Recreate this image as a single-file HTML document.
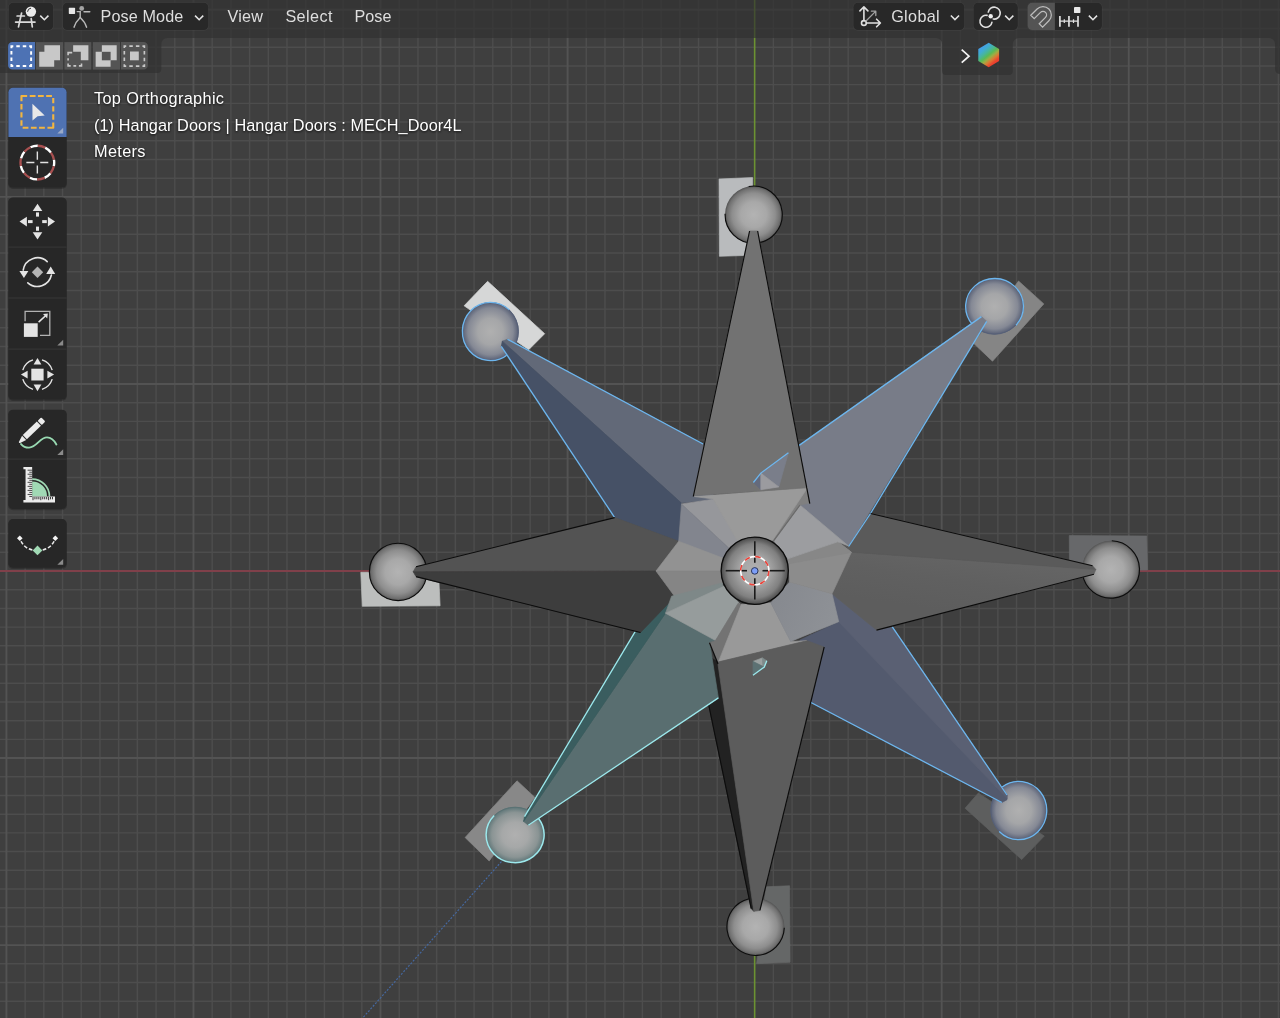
<!DOCTYPE html>
<html lang="en"><head><meta charset="utf-8"><title>Blender 3D Viewport</title>
<style>
html,body{margin:0;padding:0;}
body{width:1280px;height:1018px;overflow:hidden;background:#3f3f3f;position:relative;font-family:"Liberation Sans","DejaVu Sans",sans-serif;}
#vp{position:absolute;left:0;top:0;display:block;}

.ov{position:absolute;left:0;top:0;display:block;pointer-events:none;}

</style></head>
<body>
<svg id="vp" width="1280" height="1018" viewBox="0 0 1280 1018">
<defs>
<radialGradient id="sg" cx="50%" cy="50%" r="50%"><stop offset="0" stop-color="#b3b3b3"/><stop offset="0.45" stop-color="#a8a8a8"/><stop offset="0.75" stop-color="#8e8e8e"/><stop offset="0.92" stop-color="#707070"/><stop offset="1" stop-color="#525252"/></radialGradient>
<radialGradient id="sc" cx="50%" cy="50%" r="50%"><stop offset="0" stop-color="#b2b2b2"/><stop offset="0.45" stop-color="#a4a4a4"/><stop offset="0.8" stop-color="#808080"/><stop offset="1" stop-color="#484848"/></radialGradient>
<radialGradient id="sb" cx="50%" cy="50%" r="50%"><stop offset="0" stop-color="#b0b0b0"/><stop offset="0.45" stop-color="#a5a6a8"/><stop offset="0.8" stop-color="#858995"/><stop offset="1" stop-color="#565e74"/></radialGradient>
<radialGradient id="st" cx="50%" cy="50%" r="50%"><stop offset="0" stop-color="#b0b0b0"/><stop offset="0.45" stop-color="#a6a8a8"/><stop offset="0.8" stop-color="#8a9494"/><stop offset="1" stop-color="#5c7476"/></radialGradient>
<linearGradient id="eg" gradientUnits="userSpaceOnUse" x1="960" y1="556" x2="952" y2="612"><stop offset="0" stop-color="#646464"/><stop offset="0.45" stop-color="#606060"/><stop offset="1" stop-color="#5d5d5d"/></linearGradient>
<linearGradient id="seh" x1="0" y1="0" x2="1" y2="0.4"><stop offset="0" stop-color="#85888e"/><stop offset="1" stop-color="#8e9196"/></linearGradient>
</defs>
<path d="M25.12 0V1018M43.82 0V1018M62.53 0V1018M81.23 0V1018M99.94 0V1018M118.65 0V1018M137.35 0V1018M156.06 0V1018M174.76 0V1018M212.18 0V1018M230.88 0V1018M249.59 0V1018M268.29 0V1018M287.00 0V1018M305.71 0V1018M324.41 0V1018M343.12 0V1018M361.82 0V1018M399.24 0V1018M417.94 0V1018M436.65 0V1018M455.35 0V1018M474.06 0V1018M492.77 0V1018M511.47 0V1018M530.18 0V1018M548.88 0V1018M586.30 0V1018M605.00 0V1018M623.71 0V1018M642.41 0V1018M661.12 0V1018M679.83 0V1018M698.53 0V1018M717.24 0V1018M735.94 0V1018M773.36 0V1018M792.06 0V1018M810.77 0V1018M829.47 0V1018M848.18 0V1018M866.89 0V1018M885.59 0V1018M904.30 0V1018M923.00 0V1018M960.42 0V1018M979.12 0V1018M997.83 0V1018M1016.53 0V1018M1035.24 0V1018M1053.95 0V1018M1072.65 0V1018M1091.36 0V1018M1110.06 0V1018M1147.48 0V1018M1166.18 0V1018M1184.89 0V1018M1203.59 0V1018M1222.30 0V1018M1241.01 0V1018M1259.71 0V1018M1278.42 0V1018M0 28.53H1280M0 47.23H1280M0 65.94H1280M0 84.64H1280M0 103.35H1280M0 122.06H1280M0 140.76H1280M0 159.47H1280M0 178.17H1280M0 215.59H1280M0 234.29H1280M0 253.00H1280M0 271.70H1280M0 290.41H1280M0 309.12H1280M0 327.82H1280M0 346.53H1280M0 365.23H1280M0 402.65H1280M0 421.35H1280M0 440.06H1280M0 458.76H1280M0 477.47H1280M0 496.18H1280M0 514.88H1280M0 533.59H1280M0 552.29H1280M0 589.71H1280M0 608.41H1280M0 627.12H1280M0 645.82H1280M0 664.53H1280M0 683.24H1280M0 701.94H1280M0 720.65H1280M0 739.35H1280M0 776.77H1280M0 795.47H1280M0 814.18H1280M0 832.88H1280M0 851.59H1280M0 870.30H1280M0 889.00H1280M0 907.71H1280M0 926.41H1280M0 963.83H1280M0 982.53H1280M0 1001.24H1280" stroke="#4d4d4d" stroke-width="1.45" fill="none"/>
<path d="M6.41 0V1018M193.47 0V1018M380.53 0V1018M567.59 0V1018M941.71 0V1018M1128.77 0V1018M0 9.82H1280M0 196.88H1280M0 383.94H1280M0 758.06H1280M0 945.12H1280" stroke="#535353" stroke-width="1.9" fill="none"/>
<rect x="0" y="570" width="1280" height="2" fill="#80404a"/>
<rect x="753.85" y="0" width="1.6" height="1018" fill="#6c9232"/>
<line x1="501.4" y1="861.6" x2="362.3" y2="1018.4" stroke="#4569a2" stroke-width="1.15" stroke-dasharray="2 1.55"/>
<polygon points="719.0,179.0 752.6,177.6 753.2,255.2 719.4,256.3" fill="#b9bbbd" stroke="#b9bbbd" stroke-width="0.7" stroke-linejoin="round" />
<polygon points="487.6,281.3 544.7,333.7 528.7,349.7 464.1,305.8" fill="#d6d7d7" stroke="#d6d7d7" stroke-width="0.7" stroke-linejoin="round" />
<polygon points="1018.5,281.0 1043.8,303.9 992.5,361.2 973.6,343.3" fill="#858585" stroke="#858585" stroke-width="0.7" stroke-linejoin="round" />
<polygon points="360.8,572.3 438.5,572.3 440.1,605.8 362.3,606.3" fill="#bcbebd" stroke="#bcbebd" stroke-width="0.7" stroke-linejoin="round" />
<polygon points="1069.3,535.6 1146.7,536.0 1147.6,570.0 1069.5,570.0" fill="#67686a" stroke="#67686a" stroke-width="0.7" stroke-linejoin="round" />
<polygon points="517.0,780.8 534.9,797.4 489.2,861.0 465.1,837.5" fill="#888888" stroke="#888888" stroke-width="0.7" stroke-linejoin="round" />
<polygon points="978.3,793.1 1044.3,836.0 1021.7,859.6 965.1,808.2" fill="#5d5e5e" stroke="#5d5e5e" stroke-width="0.7" stroke-linejoin="round" />
<polygon points="766.0,886.8 789.6,885.8 790.1,962.3 756.6,963.7" fill="#656767" stroke="#656767" stroke-width="0.7" stroke-linejoin="round" />
<ellipse cx="753.7" cy="214.7" rx="28.7" ry="28.7" fill="url(#sg)"/><path d="M748.7 186.5A28.60 28.60 0 1 1 725.1 213.7" fill="none" stroke="#0c0c0c" stroke-width="1.15"/>
<ellipse cx="490.5" cy="331.5" rx="28.2" ry="29.2" fill="url(#sb)"/><ellipse cx="490.5" cy="331.5" rx="27.90" ry="28.90" fill="none" stroke="#566078" stroke-width="1"/><path d="M507.8 354.4A28.10 29.10 0 1 1 509.3 309.9" fill="none" stroke="#6db6ee" stroke-width="1.3"/>
<ellipse cx="994.5" cy="306.45" rx="29.0" ry="28.05" fill="url(#sb)"/><ellipse cx="994.5" cy="306.45" rx="28.70" ry="27.75" fill="none" stroke="#566078" stroke-width="1"/><path d="M972.4 324.4A28.90 27.95 0 1 1 1016.0 325.2" fill="none" stroke="#6db6ee" stroke-width="1.3"/>
<ellipse cx="398.1" cy="571.9" rx="28.8" ry="28.8" fill="url(#sg)"/><ellipse cx="398.1" cy="571.9" rx="28.70" ry="28.70" fill="none" stroke="#0c0c0c" stroke-width="1.15"/>
<ellipse cx="1110.8" cy="569.5" rx="28.8" ry="28.8" fill="url(#sg)"/><path d="M1111.8 540.8A28.70 28.70 0 1 1 1082.4 573.5" fill="none" stroke="#0c0c0c" stroke-width="1.15"/>
<ellipse cx="515.1" cy="834.85" rx="29.1" ry="27.95" fill="url(#st)"/><ellipse cx="515.1" cy="834.85" rx="28.80" ry="27.65" fill="none" stroke="#5a7274" stroke-width="1"/><path d="M538.6 818.5A29.00 27.85 0 1 1 494.2 815.5" fill="none" stroke="#9ce8ec" stroke-width="1.5"/>
<ellipse cx="1018.7" cy="810.5" rx="28.15" ry="29.3" fill="url(#sb)"/><ellipse cx="1018.7" cy="810.5" rx="27.85" ry="29.00" fill="none" stroke="#566078" stroke-width="1"/><path d="M1002.2 786.9A28.05 29.20 0 1 1 999.2 831.5" fill="none" stroke="#6db6ee" stroke-width="1.3"/>
<ellipse cx="755.6" cy="926.8" rx="28.8" ry="28.8" fill="url(#sg)"/><path d="M784.3 927.8A28.70 28.70 0 1 1 749.1 898.8" fill="none" stroke="#0c0c0c" stroke-width="1.15"/>
<polygon points="502.3,341.2 507.5,339.3 703.1,444.0 714.0,499.4 681.4,503.1" fill="#626978" stroke="#626978" stroke-width="0.7" stroke-linejoin="round" />
<polygon points="502.3,341.2 501.3,346.4 614.7,517.6 678.7,541.3 681.4,503.1" fill="#465166" stroke="#465166" stroke-width="0.7" stroke-linejoin="round" />
<polyline points="614.7,517.6 501.3,346.4" fill="none" stroke="#6db6ee" stroke-width="1.3" />
<polyline points="507.5,339.3 703.1,444.0" fill="none" stroke="#6db6ee" stroke-width="1.3" />
<polygon points="981.5,316.6 986.7,321.3 848.6,546.5 800.0,505.0 790.0,452.0" fill="#787c88" stroke="#787c88" stroke-width="0.7" stroke-linejoin="round" />
<polyline points="797.7,446.4 981.5,316.6" fill="none" stroke="#6db6ee" stroke-width="1.3" />
<polyline points="986.7,321.3 870.5,513.5" fill="none" stroke="#6db6ee" stroke-width="1.3" />
<polygon points="1007.0,795.0 1007.0,799.7 1001.9,802.5 810.0,702.0 800.0,640.0 838.7,621.7 832.0,593.8 891.8,626.2" fill="#535a6e" stroke="#535a6e" stroke-width="0.7" stroke-linejoin="round" />
<polygon points="1007.0,795.0 1007.0,798.5 838.7,621.7 832.0,593.8 891.8,626.2" fill="#5a6073" stroke="#5a6073" stroke-width="0.7" stroke-linejoin="round" />
<polyline points="810.0,702.0 1001.9,802.5" fill="none" stroke="#6db6ee" stroke-width="1.3" />
<polyline points="1007.0,795.0 891.8,626.2" fill="none" stroke="#6db6ee" stroke-width="1.3" />
<polygon points="700.0,650.0 717.7,662.1 753.8,911.3 751.2,908.5 708.9,705.5" fill="#222222" stroke="#222222" stroke-width="0.7" stroke-linejoin="round" />
<polyline points="706.0,692.0 751.2,908.5" fill="none" stroke="#0c0c0c" stroke-width="1.15" />
<polygon points="523.6,821.4 528.3,825.2 718.4,697.9 709.6,642.6 715.5,640.5 665.5,613.2" fill="#596e70" stroke="#596e70" stroke-width="0.7" stroke-linejoin="round" />
<polygon points="523.6,821.4 524.5,816.7 634.8,632.1 671.6,596.2 665.5,613.2" fill="#3a5d5f" stroke="#3a5d5f" stroke-width="0.7" stroke-linejoin="round" />
<polyline points="636.5,629.3 524.5,816.7" fill="none" stroke="#9ce8ec" stroke-width="1.3" />
<polyline points="528.3,825.2 718.4,697.9" fill="none" stroke="#9ce8ec" stroke-width="1.3" />
<polygon points="413.2,571.7 416.0,566.7 614.7,517.6 678.7,541.3 656.0,571.0" fill="#535353" stroke="#535353" stroke-width="0.7" stroke-linejoin="round" />
<polygon points="413.2,571.7 416.0,576.6 640.5,632.5 674.9,596.7 656.0,571.0" fill="#3d3d3d" stroke="#3d3d3d" stroke-width="0.7" stroke-linejoin="round" />
<polyline points="614.7,517.6 416.0,566.7" fill="none" stroke="#0c0c0c" stroke-width="1.15" />
<polyline points="416.0,576.6 640.5,632.5" fill="none" stroke="#0c0c0c" stroke-width="1.15" />
<polygon points="1095.8,569.5 1093.9,574.2 876.5,630.1 832.0,593.8 851.4,552.2" fill="url(#eg)" stroke="url(#eg)" stroke-width="0.7" stroke-linejoin="round" />
<polygon points="1095.8,569.5 1092.5,565.8 870.5,513.5 848.6,546.5 837.7,541.8 851.4,552.2" fill="#5a5a5a" stroke="#5a5a5a" stroke-width="0.7" stroke-linejoin="round" />
<polyline points="870.5,513.5 1092.5,565.8" fill="none" stroke="#0c0c0c" stroke-width="1.15" />
<polyline points="1093.9,574.2 876.5,630.1" fill="none" stroke="#0c0c0c" stroke-width="1.15" />
<polyline points="870.5,513.5 848.6,546.5" fill="none" stroke="#6db6ee" stroke-width="1.3" />
<polygon points="681.5,504.0 713.5,499.2 742.0,543.0 728.7,547.9" fill="#96979b" stroke="#96979b" stroke-width="0.7" stroke-linejoin="round" />
<polygon points="681.5,504.0 728.7,547.9 722.0,560.0 678.7,541.3" fill="#82858e" stroke="#82858e" stroke-width="0.7" stroke-linejoin="round" />
<polygon points="678.7,541.3 724.0,558.5 722.0,571.0 656.0,571.0" fill="#929292" stroke="#929292" stroke-width="0.7" stroke-linejoin="round" />
<polygon points="656.0,571.0 722.0,571.0 723.0,583.5 674.9,596.7" fill="#858585" stroke="#858585" stroke-width="0.7" stroke-linejoin="round" />
<polygon points="671.6,596.2 722.0,583.0 724.0,588.0 665.5,613.2" fill="#7e8888" stroke="#7e8888" stroke-width="0.7" stroke-linejoin="round" />
<polygon points="665.5,613.2 724.0,586.3 740.0,604.0 715.5,640.5" fill="#969c9c" stroke="#969c9c" stroke-width="0.7" stroke-linejoin="round" />
<polygon points="709.3,642.9 715.5,640.5 738.1,603.3 742.4,604.7 718.3,662.0" fill="#737373" stroke="#737373" stroke-width="0.7" stroke-linejoin="round" />
<polygon points="741.4,604.2 770.8,602.8 790.6,641.5 807.0,640.7 718.3,662.2" fill="#999999" stroke="#999999" stroke-width="0.7" stroke-linejoin="round" />
<polygon points="770.8,602.8 789.6,582.0 832.0,593.8 838.7,621.7 790.6,641.5" fill="url(#seh)" stroke="url(#seh)" stroke-width="0.7" stroke-linejoin="round" />
<polygon points="787.7,558.8 837.7,541.8 851.4,552.2 832.0,593.8 789.6,582.0" fill="#8c8c8c" stroke="#8c8c8c" stroke-width="0.7" stroke-linejoin="round" />
<polygon points="787.9,559.1 837.8,541.8 851.5,552.4 788.6,563.8" fill="#878787" stroke="#878787" stroke-width="0.7" stroke-linejoin="round" />
<polygon points="800.0,505.0 848.4,545.9 837.7,541.8 787.7,558.8 773.6,540.8" fill="#9c9da0" stroke="#9c9da0" stroke-width="0.7" stroke-linejoin="round" />
<polygon points="806.6,488.0 809.6,503.1 800.0,505.0 773.6,540.8 770.0,538.0" fill="#808080" stroke="#808080" stroke-width="0.7" stroke-linejoin="round" />
<polygon points="694.4,496.6 807.7,487.5 772.5,540.5 737.0,540.0 713.1,498.9" fill="#9a9a9a" stroke="#9a9a9a" stroke-width="0.7" stroke-linejoin="round" />
<polyline points="800.0,505.0 773.6,540.8" fill="none" stroke="#6a6a6a" stroke-width="1.2" />
<polygon points="749.6,231.0 757.6,231.0 809.6,503.1 806.6,487.8 693.3,495.7" fill="#727272" stroke="#727272" stroke-width="0.7" stroke-linejoin="round" />
<polyline points="693.3,496.5 749.6,231.0" fill="none" stroke="#0c0c0c" stroke-width="1.15" />
<polyline points="757.6,231.0 809.8,503.6" fill="none" stroke="#0c0c0c" stroke-width="1.15" />
<polygon points="753.4,482.5 760.8,473.1 760.8,489.7" fill="#646a7c" stroke="#646a7c" stroke-width="0.7" stroke-linejoin="round" />
<polygon points="760.8,473.1 788.4,452.8 778.8,486.9" fill="#7a7e8a" stroke="#7a7e8a" stroke-width="0.7" stroke-linejoin="round" />
<polygon points="760.8,473.1 778.8,486.9 760.8,489.7" fill="#9b9b9f" stroke="#9b9b9f" stroke-width="0.7" stroke-linejoin="round" />
<polyline points="753.4,482.5 760.8,473.1 788.4,452.8" fill="none" stroke="#6db6ee" stroke-width="1.3" />
<polygon points="717.7,662.1 807.0,640.7 824.0,647.0 759.9,910.4 753.8,911.3" fill="#5c5c5c" stroke="#5c5c5c" stroke-width="0.7" stroke-linejoin="round" />
<polyline points="824.2,647.0 759.9,910.4" fill="none" stroke="#0c0c0c" stroke-width="1.15" />
<polyline points="709.5,642.8 718.0,664.0" fill="none" stroke="#0c0c0c" stroke-width="1.15" />
<polygon points="753.0,661.4 762.4,657.9 763.0,666.4" fill="#9ba1a1" stroke="#9ba1a1" stroke-width="0.7" stroke-linejoin="round" />
<polygon points="762.4,657.9 766.8,660.8 764.3,667.1 763.0,666.4" fill="#7e8b8b" stroke="#7e8b8b" stroke-width="0.7" stroke-linejoin="round" />
<polygon points="753.0,661.4 763.0,666.4 764.3,667.1 753.0,675.3" fill="#5c7173" stroke="#5c7173" stroke-width="0.7" stroke-linejoin="round" />
<polyline points="753.0,675.3 764.3,667.1 766.8,660.8" fill="none" stroke="#9ce8ec" stroke-width="1.3" />
<circle cx="754.75" cy="570.8" r="33.9" fill="url(#sc)"/>
<circle cx="754.75" cy="570.8" r="33.6" fill="none" stroke="#0c0c0c" stroke-width="1.3"/>
<g stroke="#1a1a1a" stroke-width="1.6"><line x1="725.7" y1="570.7" x2="747" y2="570.7"/><line x1="762.5" y1="570.7" x2="784.8" y2="570.7"/><line x1="754.8" y1="541.2" x2="754.8" y2="562.8"/><line x1="754.8" y1="578.3" x2="754.8" y2="599.6"/></g>
<circle cx="754.8" cy="570.7" r="14.1" fill="none" stroke="#ffffff" stroke-width="1.6"/>
<circle cx="754.8" cy="570.7" r="14.1" fill="none" stroke="#e8433a" stroke-width="1.6" stroke-dasharray="5.537 5.537"/>
<circle cx="754.75" cy="570.9" r="3.3" fill="#7c9ef8" stroke="#2a3558" stroke-width="1"/></svg>
<svg class="ov" width="1280" height="80" viewBox="0 0 1280 80"><defs><linearGradient id="hexg" gradientUnits="userSpaceOnUse" x1="981.4" y1="46" x2="996" y2="64"><stop offset="0" stop-color="#479cee"/><stop offset="0.2" stop-color="#40acd0"/><stop offset="0.36" stop-color="#48b698"/><stop offset="0.5" stop-color="#58ba56"/><stop offset="0.62" stop-color="#9cae44"/><stop offset="0.75" stop-color="#dc7a34"/><stop offset="0.88" stop-color="#ea452e"/><stop offset="1" stop-color="#ee382c"/></linearGradient></defs><path d="M0 0H1280V74.1A4.9 4.9 0 0 1 1275.1 69.2V44.1A6 6 0 0 0 1269.1 38.1H1018.8A6 6 0 0 0 1012.8 44.1V70.9A4 4 0 0 1 1008.8 74.9H946.1A4 4 0 0 1 942.1 70.9V44.1A6 6 0 0 0 936.1 38.1H167.3A6 6 0 0 0 161.3 44.1V68.9A4 4 0 0 1 157.3 72.9H0Z" fill="rgba(48,48,48,0.68)"/></svg>
<svg class="ov" width="1280" height="600" viewBox="0 0 1280 600"><rect x="8.10" y="2.2" width="45.70" height="28.5" rx="5.1" fill="rgba(255,255,255,0.05)"/>
<rect x="8.70" y="2.80" width="44.50" height="27.30" rx="4.5" fill="#282828"/>
<rect x="62.20" y="2.2" width="146.70" height="28.5" rx="5.1" fill="rgba(255,255,255,0.05)"/>
<rect x="62.80" y="2.80" width="145.50" height="27.30" rx="4.5" fill="#282828"/>
<rect x="852.80" y="2.2" width="112.10" height="28.5" rx="5.1" fill="rgba(255,255,255,0.05)"/>
<rect x="853.40" y="2.80" width="110.90" height="27.30" rx="4.5" fill="#282828"/>
<rect x="972.90" y="2.2" width="45.50" height="28.5" rx="5.1" fill="rgba(255,255,255,0.05)"/>
<rect x="973.50" y="2.80" width="44.30" height="27.30" rx="4.5" fill="#282828"/>
<rect x="1027.00" y="2.2" width="75.50" height="28.5" rx="5.1" fill="rgba(255,255,255,0.05)"/>
<rect x="1027.60" y="2.80" width="74.30" height="27.30" rx="4.5" fill="#282828"/>
<path d="M1032.1 2.8H1054.9V30.1H1032.1A4.5 4.5 0 0 1 1027.6 25.6V7.3A4.5 4.5 0 0 1 1032.1 2.8Z" fill="#545454"/>
<rect x="8.10" y="87.90" width="58.80" height="101.10" rx="4.8999999999999995" fill="rgba(0,0,0,0.22)"/><rect x="8.40" y="87.70" width="58.20" height="99.90" rx="4.6" fill="#272727"/>
<path d="M13.0 87.7H61.99999999999999A4.6 4.6 0 0 1 66.6 92.3V137.1H8.4V92.3A4.6 4.6 0 0 1 13.0 87.7Z" fill="#4f72b2"/>
<rect x="8.10" y="197.70" width="58.80" height="203.30" rx="4.8999999999999995" fill="rgba(0,0,0,0.22)"/><rect x="8.40" y="197.50" width="58.20" height="202.10" rx="4.6" fill="#272727"/>
<rect x="8.4" y="246.6" width="58.2" height="1" fill="#383838"/>
<rect x="8.4" y="297.5" width="58.2" height="1" fill="#383838"/>
<rect x="8.4" y="348.6" width="58.2" height="1" fill="#383838"/>
<rect x="8.10" y="409.90" width="58.80" height="100.40" rx="4.8999999999999995" fill="rgba(0,0,0,0.22)"/><rect x="8.40" y="409.70" width="58.20" height="99.20" rx="4.6" fill="#272727"/>
<rect x="8.4" y="458.6" width="58.2" height="1" fill="#383838"/>
<rect x="8.10" y="519.30" width="58.80" height="49.80" rx="4.8999999999999995" fill="rgba(0,0,0,0.22)"/><rect x="8.40" y="519.10" width="58.20" height="48.60" rx="4.6" fill="#272727"/><g stroke="#d9d9d9" stroke-width="1.7" stroke-linecap="round" fill="none"><line x1="17.1" y1="16" x2="24.4" y2="16"/><line x1="15.6" y1="22.1" x2="35" y2="22.1"/><line x1="21.6" y1="13" x2="18.5" y2="26.9"/><line x1="31.2" y1="18.6" x2="32.3" y2="26.9"/></g>
<circle cx="30.9" cy="11.6" r="5.2" fill="#ebebeb"/>
<path d="M27.6 11.4A3.4 3.4 0 0 1 30.6 8.2" stroke="#333" stroke-width="1" fill="none" stroke-linecap="round"/>
<polyline points="40.25,15.65 44.35,19.70 48.45,15.65" fill="none" stroke="#e4e4e4" stroke-width="1.55" stroke-linecap="butt" stroke-linejoin="miter"/>
<rect x="68.8" y="7.8" width="6.3" height="6.1" rx="0.6" fill="#e6e6e6"/>
<circle cx="81.7" cy="8.4" r="2.4" fill="#a4a4a4"/>
<g stroke="#b9b9b9" stroke-width="1.4" fill="none" stroke-linecap="round"><path d="M77.2 11.6H80.2M84 11.7H89.8"/><path d="M80.2 11.7V17.4"/><path d="M80.2 17.4C77.5 20 75.2 23 74 27.2"/><path d="M80.2 17.4C83 20 85.4 23 86.6 27.2"/></g>
<polyline points="195.05,15.65 199.15,19.70 203.25,15.65" fill="none" stroke="#e4e4e4" stroke-width="1.55" stroke-linecap="butt" stroke-linejoin="miter"/>
<g stroke="#e0e0e0" stroke-width="1.6" fill="none" stroke-linecap="round" stroke-linejoin="round"><circle cx="863.9" cy="23" r="2.4"/><path d="M863.9 20.4V7.2M859.9 10.9L863.9 6.9L867.9 10.9"/><path d="M866.5 23H880.3M876.6 19.2L880.4 23L876.6 26.8"/></g>
<g stroke="#a0a0a0" stroke-width="1.3" fill="none" stroke-linecap="round" stroke-linejoin="round"><path d="M866 21L875.6 11.4M871.4 11.2H875.8V15.6"/></g>
<polyline points="950.85,15.55 954.95,19.60 959.05,15.55" fill="none" stroke="#e4e4e4" stroke-width="1.55" stroke-linecap="butt" stroke-linejoin="miter"/>
<g stroke="#e0e0e0" stroke-width="1.6" fill="none" stroke-linecap="round"><path d="M988.29 12.06A6 6 0 1 1 993.16 19.01"/><path d="M991.91 22.34A6 6 0 1 1 987.04 15.39"/></g>
<circle cx="990.7" cy="16.2" r="2.2" fill="#f0f0f0"/>
<polyline points="1005.15,15.65 1009.25,19.70 1013.35,15.65" fill="none" stroke="#e4e4e4" stroke-width="1.55" stroke-linecap="butt" stroke-linejoin="miter"/>
<path d="M1030.8 15.3L1037.1 9A8.3 8.3 0 0 1 1048.9 20.8L1042.6 27.1L1039.2 23.7L1045.5 17.4A3.5 3.5 0 0 0 1040.5 12.4L1034.2 18.7Z" fill="none" stroke="#bdbdbd" stroke-width="1.25" stroke-linejoin="miter"/>
<g stroke="#e0e0e0" stroke-width="1.7" fill="none"><path d="M1059.9 16V26.7M1068.95 16V26.7M1078 16V26.7"/></g>
<g stroke="#e0e0e0" stroke-width="1.2" fill="none"><path d="M1059.9 21.2H1078M1064.3 19.2V23.1M1073.5 19.2V23.1"/></g>
<rect x="1074" y="6.9" width="6.4" height="6.2" rx="0.9" fill="#e8e8e8"/>
<polyline points="1088.85,15.65 1092.95,19.70 1097.05,15.65" fill="none" stroke="#e4e4e4" stroke-width="1.55" stroke-linecap="butt" stroke-linejoin="miter"/><path d="M12.3 42.1H35.05V69.6H12.3A4.2 4.2 0 0 1 8.1 65.39999999999999V46.300000000000004A4.2 4.2 0 0 1 12.3 42.1Z" fill="#4d72b4"/>
<rect x="35.9" y="42.1" width="27.30" height="27.50" fill="#545454"/>
<rect x="64.35" y="42.1" width="26.95" height="27.50" fill="#545454"/>
<rect x="92.8" y="42.1" width="27.20" height="27.50" fill="#545454"/>
<path d="M120.95 42.1H143.70000000000002A4.2 4.2 0 0 1 147.9 46.300000000000004V65.39999999999999A4.2 4.2 0 0 1 143.70000000000002 69.6H120.95Z" fill="#545454"/>
<rect x="11.42" y="46.27" width="19.70" height="19.70" fill="none" stroke="#ffffff" stroke-width="1.95" stroke-dasharray="3.80 2.97 3.5 2.97 3.5 2.97" stroke-dashoffset="1.90"/>
<path d="M44.4 45.3H60V60.3H54.2V66.7H39.2V51.8H44.4Z" fill="#c8c8c8"/>
<path d="M73.15 45.3H88.4V60.3H80.8V51.8H73.15Z" fill="#c8c8c8"/>
<path d="M72.2 52.6H68.1V55.2M68.1 58.2V60.6M68.1 63.4V65.9H70.7M73.4 65.9H76.2M78.9 65.9H81.5V63.4" fill="none" stroke="#c8c8c8" stroke-width="1.6"/>
<path d="M101.85 45.3H116.7V60.3H110.6V66.7H95.65V51.8H101.85Z" fill="#c8c8c8"/>
<rect x="101.85" y="51.8" width="8.75" height="8.5" fill="#545454"/>
<rect x="124.33" y="46.12" width="20.05" height="20.00" fill="none" stroke="#c8c8c8" stroke-width="1.65" stroke-dasharray="3.80 3.08 3.5 3.08 3.5 3.08" stroke-dashoffset="1.90"/>
<rect x="130" y="51.5" width="8.8" height="8.8" fill="#c8c8c8"/><polyline points="961.7,49.6 969.0,56.15 961.7,62.7" fill="none" stroke="#f4f4f4" stroke-width="1.75" stroke-linecap="butt" stroke-linejoin="miter"/>
<polygon points="988.7,42.8 999.1,48.9 999.1,61.1 988.7,67.2 978.3,61.1 978.3,48.9" fill="url(#hexg)"/><path d="M21.45 96.05H53.25V127.75H21.45Z" fill="none" stroke="#f2b540" stroke-width="2.1" stroke-linejoin="round" stroke-dasharray="5.7 2.6 5.8 2.4 5.8 2.4 5.8 3.3 5.3 2.8 5.3 2.8 5.4 2.8 11.1 2.6 5.8 2.4 5.8 2.4 5.8 3.3 5.3 2.8 5.3 2.8 5.4 2.8 5.4 0"/>
<polygon points="32.4,103.8 44.7,115.4 37.6,116.2 32.5,120.6" fill="#e8e8e8"/>
<polygon points="63.2,127.7 63.2,133.6 57.3,133.6" fill="#9aaac8"/>
<circle cx="37.35" cy="162.6" r="16.85" fill="none" stroke="#ffffff" stroke-width="2.35" stroke-dasharray="7.562 7.562" stroke-dashoffset="3.781"/>
<circle cx="37.35" cy="162.6" r="16.85" fill="none" stroke="#a85050" stroke-width="2.35" stroke-dasharray="7.562 7.562" stroke-dashoffset="-3.781"/>
<g stroke="#e2e2e2" stroke-width="1.4"><path d="M26.35 162.5H34.4M40.2 162.5H48.3M37.35 151.6V159.65M37.35 165.5V173.5"/></g>
<g fill="#e4e4e4"><polygon points="37.5,203.79999999999998 42.3,211.0 32.7,211.0"/><polygon points="37.5,239.4 42.3,232.2 32.7,232.2"/><polygon points="19.5,221.6 26.9,216.79999999999998 26.9,226.4"/><polygon points="55.0,221.6 47.9,216.79999999999998 47.9,226.4"/><rect x="36.0" y="212.4" width="3" height="4.2"/><rect x="36.0" y="226.6" width="3" height="4.2"/><rect x="28.0" y="220.1" width="4.6" height="3"/><rect x="42.2" y="220.1" width="4.6" height="3"/></g>
<g fill="none" stroke="#e4e4e4" stroke-width="1.6" stroke-linecap="round"><path d="M23.2 270.2A14.4 14.4 0 0 1 47.2 261.6"/><path d="M51.4 275A14.4 14.4 0 0 1 27.8 282.8"/></g>
<polygon points="19.4,271 28.4,271 23.9,278" fill="#e4e4e4"/><polygon points="50.7,266.6 55.2,273.9 46.2,273.9" fill="#e4e4e4"/>
<polygon points="37.5,266.5 43.2,272.2 37.5,277.9 31.8,272.2" fill="#b4b4b4"/>
<path d="M25.1 321.2V311.3H49.8V335.3H40" fill="none" stroke="#b2b2b2" stroke-width="1.3"/>
<rect x="23.9" y="323.3" width="13.8" height="13.6" fill="#e4e4e4"/>
<path d="M38.6 322.2L46.4 315" stroke="#e4e4e4" stroke-width="1.6" fill="none"/><polygon points="47.8,313.4 47.2,318.4 43,314" fill="#e4e4e4"/>
<polygon points="63.2,339.7 63.2,345.6 57.3,345.6" fill="#8a8a8a"/>
<rect x="31.3" y="368.70000000000005" width="12.3" height="11.8" fill="#e4e4e4"/>
<path d="M52.2 379.1A15.4 15.4 0 0 1 42.0 389.3M33.0 389.3A15.4 15.4 0 0 1 22.8 379.1M22.8 370.1A15.4 15.4 0 0 1 33.0 359.9M42.0 359.9A15.4 15.4 0 0 1 52.2 370.1" fill="none" stroke="#e4e4e4" stroke-width="1.4"/>
<g fill="#e4e4e4"><polygon points="37.5,358.0 41.4,364.6 33.6,364.6"/><polygon points="37.5,391.20000000000005 41.4,384.6 33.6,384.6"/><polygon points="20.9,374.6 27.6,370.70000000000005 27.6,378.5"/><polygon points="54.1,374.6 47.4,370.70000000000005 47.4,378.5"/></g>
<g transform="translate(18.95 442.9) rotate(-44)" fill="#ebebeb"><path d="M0.9 -0.9Q-0.6 0 0.9 0.9L7.2 2.95V-2.95Z"/><rect x="8.15" y="-2.95" width="19.6" height="5.9"/><rect x="28.7" y="-2.95" width="5.1" height="5.9" rx="1"/></g>
<path d="M21.05 444.05C23.3 446.6 26 447.7 29.1 447.6C33 447.4 35.8 444.8 38.5 442.2C41.4 439.5 43.8 437.4 47 437.45C51 437.6 54.3 440.6 56.4 444.5" fill="none" stroke="#98dab2" stroke-width="1.85" stroke-linecap="round"/>
<polygon points="63.2,449.2 63.2,455.1 57.3,455.1" fill="#8a8a8a"/>
<path d="M32.15 496.4V481.5A14.9 14.9 0 0 1 47.05 496.4Z" fill="#a0d9b4"/>
<path d="M32.15 479.1A17.3 17.3 0 0 1 49.45 496.4" fill="none" stroke="#a0d9b4" stroke-width="1.65"/>
<path d="M23.4 467.1H32.15V496.6H55V502.5H23.4V500.1H25.55V469.25H23.4Z" fill="#ececec"/>
<path d="M27.6 470.20H32.15M29.3 472.22H32.15M27.6 474.24H32.15M29.3 476.26H32.15M27.6 478.28H32.15M29.3 480.30H32.15M27.6 482.32H32.15M29.3 484.34H32.15M27.6 486.36H32.15M29.3 488.38H32.15M27.6 490.40H32.15M29.3 492.42H32.15M27.6 494.44H32.15M29.3 496.46H32.15" stroke="#2c2c2c" stroke-width="0.85" fill="none"/>
<path d="M33.00 496.9V500.2M34.95 496.9V499.3M36.90 496.9V499.3M38.85 496.9V499.3M40.80 496.9V500.2M42.75 496.9V499.3M44.70 496.9V499.3M46.65 496.9V499.3M48.60 496.9V500.2M50.55 496.9V499.3M52.50 496.9V499.3" stroke="#2c2c2c" stroke-width="0.95" fill="none"/>
<path d="M19.8 538.3Q24 550.5 37.5 550.4" fill="none" stroke="#ececec" stroke-width="1.55" stroke-dasharray="3.7 1.9" stroke-dashoffset="-3.1"/>
<path d="M55.35 538.3Q51 550.5 37.5 550.4" fill="none" stroke="#ececec" stroke-width="1.55" stroke-dasharray="3.7 1.9" stroke-dashoffset="-3.1"/>
<polygon points="19.8,535.5 22.6,538.3 19.8,541.1 17,538.3" fill="#f4f4f4"/><polygon points="55.35,535.5 58.15,538.3 55.35,541.1 52.55,538.3" fill="#f4f4f4"/>
<polygon points="37.5,545.55 42.35,550.4 37.5,555.25 32.65,550.4" fill="#a0d9b4"/>
<polygon points="63.2,558.9 63.2,564.8 57.3,564.8" fill="#8a8a8a"/></svg>
<svg class="ov" style="will-change:transform" width="1280" height="200" viewBox="0 0 1280 200" font-family="Liberation Sans, DejaVu Sans, sans-serif"><g font-size="16.2" fill="#dedede"><text id="t_pose" x="100.6" y="22" textLength="82.7" lengthAdjust="spacing">Pose Mode</text><text id="t_view" x="227.6" y="22" textLength="35.4" lengthAdjust="spacing">View</text><text id="t_sel" x="285.4" y="22" textLength="47.1" lengthAdjust="spacing">Select</text><text id="t_pm" x="354.5" y="22" textLength="37.0" lengthAdjust="spacing">Pose</text><text id="t_glob" x="891.2" y="22" textLength="48.5" lengthAdjust="spacing">Global</text></g><g font-size="16.3" fill="#ffffff" style="filter:drop-shadow(0 1px 1px rgba(0,0,0,.75))"><text id="l1" x="94.0" y="104.0" textLength="130.0" lengthAdjust="spacing">Top Orthographic</text><text id="l2" x="94.0" y="130.5" textLength="367.5" lengthAdjust="spacing">(1) Hangar Doors | Hangar Doors : MECH_Door4L</text><text id="l3" x="94.0" y="156.7" textLength="51.4" lengthAdjust="spacing">Meters</text></g></svg>
</body></html>
